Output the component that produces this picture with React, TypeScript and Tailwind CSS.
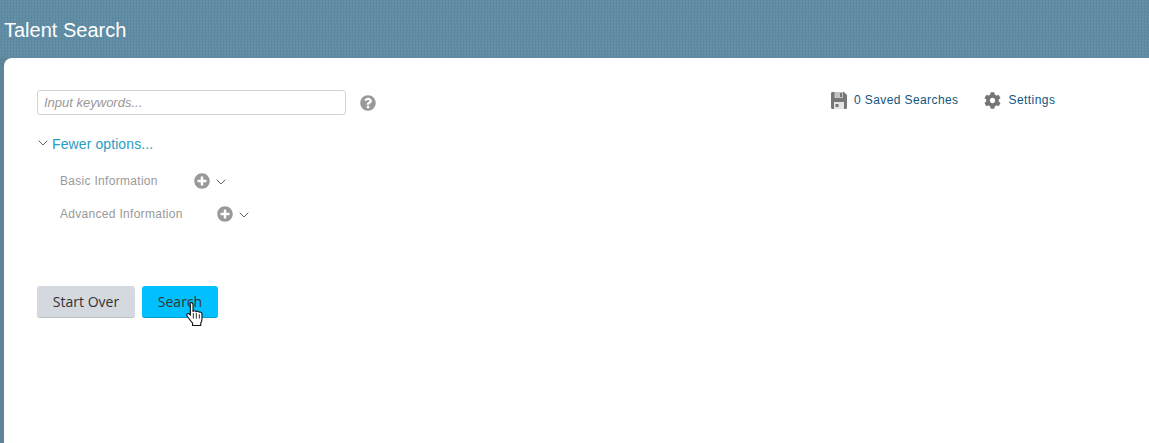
import { FaCog, FaPlusCircle, FaQuestionCircle } from 'react-icons/fa';

const ARIAL = "font-['Liberation_Sans',Arial,sans-serif]";

function Chevron({ className }: { className?: string }) {
  return (
    <svg viewBox="0 0 11 7" className={`h-[6px] w-[10px] ${className ?? ''}`} fill="none" stroke="#444" strokeWidth="1">
      <path d="M0.5 0.8 L5.5 5.8 L10.5 0.8" />
    </svg>
  );
}

function FloppyIcon() {
  return (
    <svg viewBox="0 0 16 17" className="mr-[7px] h-[17px] w-[16px]">
      <path d="M0 1.500C0 .7.7 0 1.500 0H13l3 3v12.500c0 .8-.7 1.500-1.500 1.500h-13C.7 17 0 16.300 0 15.500z" fill="#777" />
      <rect x="3.500" y="0" width="8.500" height="6" fill="#c4c4c4" />
      <rect x="9" y="1" width="2" height="4" fill="#777" />
      <rect x="3" y="10" width="10" height="7" fill="#e4e4e4" />
      <rect x="4.500" y="12" width="3" height="3" fill="#777" />
    </svg>
  );
}

function HandCursor() {
  return (
    <svg viewBox="0.5 1 16 23.5" className="absolute left-[44px] top-[16px] h-[26px] w-[18px]">
      <path
        d="M5 1.600c1 0 1.700.7 1.700 1.700v6.200c.4-.9 2.400-.9 2.800.3.500-.8 2.300-.7 2.700.5.700-.5 2.500-.1 2.600 1.300v4.900c0 1.500-.5 2.400-1.100 3.500v2.200H6.300v-2.100c-1.200-1.300-3.200-3.900-4.600-6-.6-.9-.9-1.700-.3-2.300.6-.6 1.500-.4 2.100.2l.8.9V3.300C3.300 2.300 4 1.600 5 1.600z"
        fill="#fff"
        stroke="#111"
        strokeWidth="1"
        strokeLinejoin="round"
      />
      <path d="M7 11v5M9.700 11v5M12.400 12v4" stroke="#111" strokeWidth="0.8" fill="none" />
    </svg>
  );
}

function OptionRow({ label, gapClass }: { label: string; gapClass: string }) {
  return (
    <div className="flex h-[33px] items-center pl-[23px]">
      <span className="text-[12px] leading-none tracking-[0.3px] text-[#999]">{label}</span>
      <FaPlusCircle className={`${gapClass} text-[16px] text-[#999]`} />
      <Chevron className="ml-[6px] mt-[3px]" />
    </div>
  );
}

export default function App() {
  return (
    <div className={`flex h-[443px] w-[1149px] flex-col overflow-hidden bg-[#5d8499] ${ARIAL}`}>
      <header className="flex h-[58px] shrink-0 items-center bg-[repeating-conic-gradient(#5a88a0_0_25%,#6890a6_0_50%)] bg-[length:3px_3px] pl-[4px] pt-[2px]">
        <h1 className="text-[20px] font-normal leading-none text-white">Talent Search</h1>
      </header>

      <main className="ml-[4px] flex-1 rounded-tl-[8px] bg-white pl-[33px] pt-[32px]">
        <div className="flex h-[25px] items-center">
          <input
            readOnly
            placeholder="Input keywords..."
            className="h-[25px] w-[309px] rounded-[3px] border border-[#d4d4d4] px-[6px] text-[13px] italic text-[#666] outline-none placeholder:text-[#999]"
          />
          <FaQuestionCircle className="ml-[14px] text-[16px] text-[#999]" />
          <a className="-mt-[5px] ml-[455px] flex items-center text-[12px] tracking-[0.4px] text-[#10557f]">
            <FloppyIcon />0 Saved Searches
          </a>
          <a className="-mt-[5px] ml-[26px] flex items-center text-[12px] tracking-[0.45px] text-[#10557f]">
            <FaCog className="mr-[7px] text-[17px] text-[#757575]" />Settings
          </a>
        </div>

        <div className="mt-[21px] flex h-[16px] items-center">
          <Chevron className="mb-[2px] ml-[1px]" />
          <a className="ml-[4px] text-[14px] leading-none tracking-[0.1px] text-[#2a9cc4]">Fewer options...</a>
        </div>

        <div className="mt-[12px]">
          <OptionRow label="Basic Information" gapClass="ml-[36px]" />
          <OptionRow label="Advanced Information" gapClass="ml-[34px]" />
        </div>

        <div className="mt-[56px] flex gap-[7px] font-['Open_Sans',sans-serif] text-[14px]">
          <button className="h-[32px] w-[98px] rounded-[3px] border-b border-[#b9c1c8] bg-[#d3d9de] text-[#333]">
            Start Over
          </button>
          <button className="relative h-[32px] w-[76px] rounded-[3px] border-b border-[#0a9fd0] bg-[#00c0ff] text-[#333]">
            Search
            <HandCursor />
          </button>
        </div>
      </main>
    </div>
  );
}
